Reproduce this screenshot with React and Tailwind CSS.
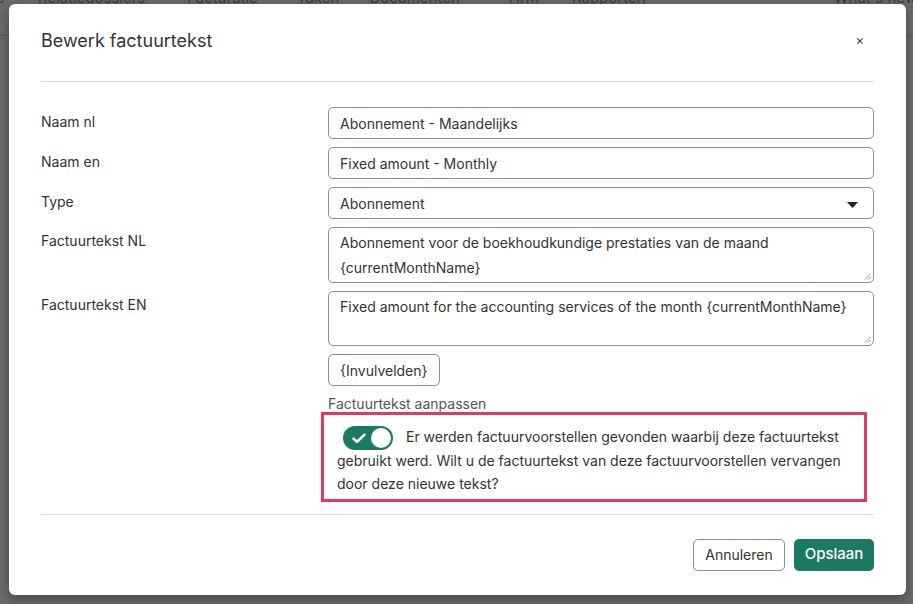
import React from 'react';

const font = { fontFamily: 'Inter, "Noto Sans", sans-serif' };

function Toggle() {
  return (
    <span className="relative -my-[6px] mr-[13px] ml-[6px] inline-flex h-[24px] w-[50px] items-center rounded-full bg-[#1c7a62] align-middle">
      <svg className="ml-[9px]" width="14" height="11" viewBox="0 0 14 11" fill="none">
        <path d="M1.6 5.6 5 8.9 12.4 1.8" stroke="white" strokeWidth="2.6" strokeLinecap="round" strokeLinejoin="round" />
      </svg>
      <span className="absolute right-[2px] top-[2px] h-[20px] w-[20px] rounded-full bg-white" />
    </span>
  );
}

export default function App() {
  const navItems = [
    ['Relatiedossiers', 'ml-[33px]'],
    ['Facturatie', 'ml-[42px]'],
    ['Taken', 'ml-[39px]'],
    ['Documenten', 'ml-[30px]'],
    ['Hrm', 'ml-[49px]'],
    ['Rapporten', 'ml-[33px]'],
  ];

  return (
    <div className="relative h-[604px] w-[913px] overflow-hidden bg-[#6a6a6a]" style={font}>
      {/* dimmed page behind the modal */}
      <div className="flex h-[36px] items-start border-b border-[#5c5c5c] text-[15px] text-[#3a3a3a]">
        <span className="-mt-[13px] -ml-[4px]">e</span>
        {navItems.map(([t, m]) => (
          <span key={t} className={`-mt-[13px] ${m}`}>{t}</span>
        ))}
        <span className="-mt-[13px] ml-auto mr-[-4px]">What's new</span>
      </div>

      {/* modal */}
      <div className="absolute left-[9px] top-[4px] w-[897px] rounded-[6px] bg-white px-[32px] pb-[24px] text-[#333] shadow-[0_4px_12px_rgba(0,0,0,0.35)]">
        <div className="flex h-[78px] items-center justify-between border-b border-[#dcdcdc] pb-[4px]">
          <h2 className="text-[18px] font-normal text-[#333]">Bewerk factuurtekst</h2>
          <button className="mr-[10px] text-[13px] text-[#444]">×</button>
        </div>

        <div className="mt-[25px] grid grid-cols-[287px_546px] gap-y-[8px] text-[14px]">
          <label className="pt-[5px] leading-[20px]">Naam nl</label>
          <div className="flex h-[32px] items-center rounded-[5px] border border-[#8f8f8f] px-[11px]">Abonnement - Maandelijks</div>

          <label className="pt-[5px] leading-[20px]">Naam en</label>
          <div className="flex h-[32px] items-center rounded-[5px] border border-[#8f8f8f] px-[11px]">Fixed amount - Monthly</div>

          <label className="pt-[5px] leading-[20px]">Type</label>
          <div className="flex h-[32px] items-center justify-between rounded-[5px] border border-[#8f8f8f] px-[11px]">
            <span>Abonnement</span>
            <svg className="mr-[4px] mt-[4px]" width="11" height="6" viewBox="0 0 11 6">
              <path d="M0 0h11L5.5 6z" fill="#222" />
            </svg>
          </div>

          <label className="pt-[4px] leading-[20px]">Factuurtekst NL</label>
          <div className="relative h-[56px] rounded-[5px] border border-[#8f8f8f] px-[11px] pt-[2px] leading-[25px]">
            Abonnement voor de boekhoudkundige prestaties van de maand
            <br />
            {'{currentMonthName}'}
            <svg className="absolute bottom-[2px] right-[2px]" width="7" height="7" viewBox="0 0 7 7">
              <path d="M6.5 1 1 6.5M6.5 4 4 6.5" stroke="#777" strokeWidth="0.8" />
            </svg>
          </div>

          <label className="pt-[4px] leading-[20px]">Factuurtekst EN</label>
          <div className="relative h-[55px] rounded-[5px] border border-[#8f8f8f] px-[11px] pt-[2px] leading-[25px]">
            Fixed amount for the accounting services of the month {'{currentMonthName}'}
            <svg className="absolute bottom-[2px] right-[2px]" width="7" height="7" viewBox="0 0 7 7">
              <path d="M6.5 1 1 6.5M6.5 4 4 6.5" stroke="#777" strokeWidth="0.8" />
            </svg>
          </div>

          <div />
          <div>
            <button className="h-[32px] rounded-[5px] border border-[#8f8f8f] px-[11px] text-[14px] text-[#333]">{'{Invulvelden}'}</button>
            <div className="mt-[8px] leading-[20px] text-[#555]">Factuurtekst aanpassen</div>
            <div className="-ml-[7px] -mt-[2px] w-[546px] border-[3px] border-[#e5375f] pb-[3px] pl-[13px] pr-[12px] pt-[10px] leading-[23.5px] text-[#333]">
              <Toggle />
              Er werden factuurvoorstellen gevonden waarbij deze factuurtekst gebruikt werd. Wilt u de factuurtekst van deze factuurvoorstellen vervangen door deze nieuwe tekst?
            </div>
          </div>
        </div>

        <div className="mt-[12px] border-t border-[#dcdcdc]" />

        <div className="mt-[24px] flex justify-end gap-[9px] text-[14px]">
          <button className="h-[32px] w-[92px] rounded-[5px] border border-[#8f8f8f] text-[#333]">Annuleren</button>
          <button className="h-[32px] w-[80px] rounded-[5px] bg-[#1b7a63] text-[15px] font-medium text-white">Opslaan</button>
        </div>
      </div>
    </div>
  );
}
